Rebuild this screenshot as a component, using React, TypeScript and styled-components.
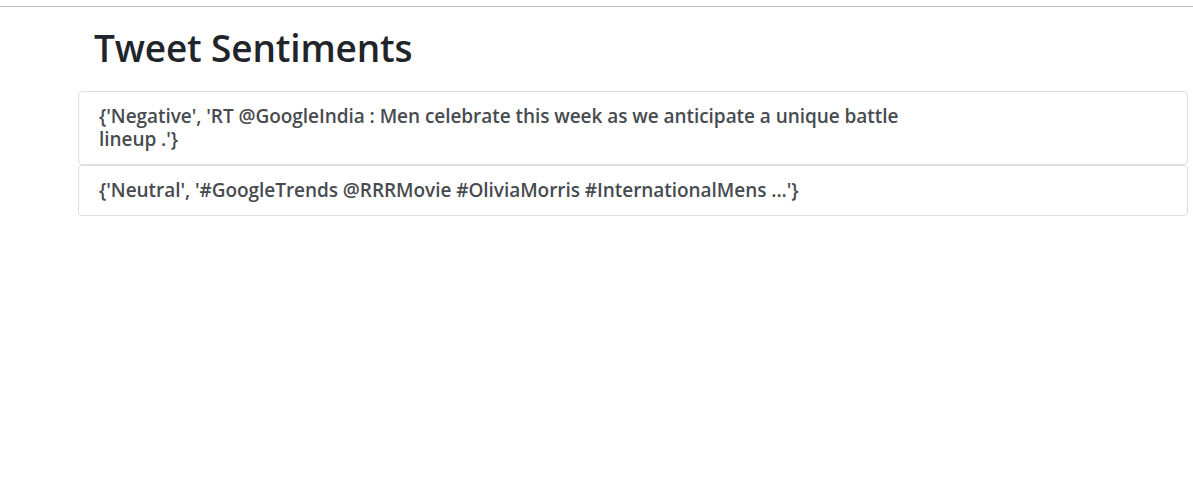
import React from "react";
import styled, { createGlobalStyle } from "styled-components";

const Global = createGlobalStyle`
  html, body { margin: 0; padding: 0; background: #fff; }
  body { font-family: "Open Sans", "Noto Sans", sans-serif; color: #212529; }
`;

const Page = styled.div`
  width: 1193px;
  min-height: 487px;
  padding-top: 6px;
  box-sizing: border-box;
`;

const Rule = styled.div`
  height: 0;
  border-top: 1px solid #bdbdbd;
`;

const Main = styled.main`
  margin-left: 78px;
  width: 1110px;
`;

const Title = styled.h1`
  margin: 0;
  padding: 18px 0 0 16px;
  height: 66px;
  box-sizing: border-box;
  font-size: 37px;
  font-weight: 600;
  line-height: 46px;
  color: #212529;
  letter-spacing: -0.15px;
`;

const List = styled.ul`
  list-style: none;
  margin: 18px 0 0;
  padding: 0;
  display: flex;
  flex-direction: column;
`;

const Item = styled.li`
  border: 1px solid #dfdfdf;
  border-radius: 4px;
  padding: 13px 20px 13px 20px;
`;

const Text = styled.p`
  margin: 0;
  max-width: 850px;
  font-size: 19px;
  font-weight: 600;
  line-height: 23px;
  color: #474b50;
  letter-spacing: -0.05px;
`;

const tweets = [
  "{'Negative', 'RT @GoogleIndia : Men celebrate this week as we anticipate a unique battle lineup .'}",
  "{'Neutral', '#GoogleTrends @RRRMovie #OliviaMorris #InternationalMens ...'}",
];

export default function App() {
  return (
    <>
      <Global />
      <Page>
        <Rule />
        <Main>
          <Title>Tweet Sentiments</Title>
          <List>
            {tweets.map((t) => (
              <Item key={t}>
                <Text>{t}</Text>
              </Item>
            ))}
          </List>
        </Main>
      </Page>
    </>
  );
}
